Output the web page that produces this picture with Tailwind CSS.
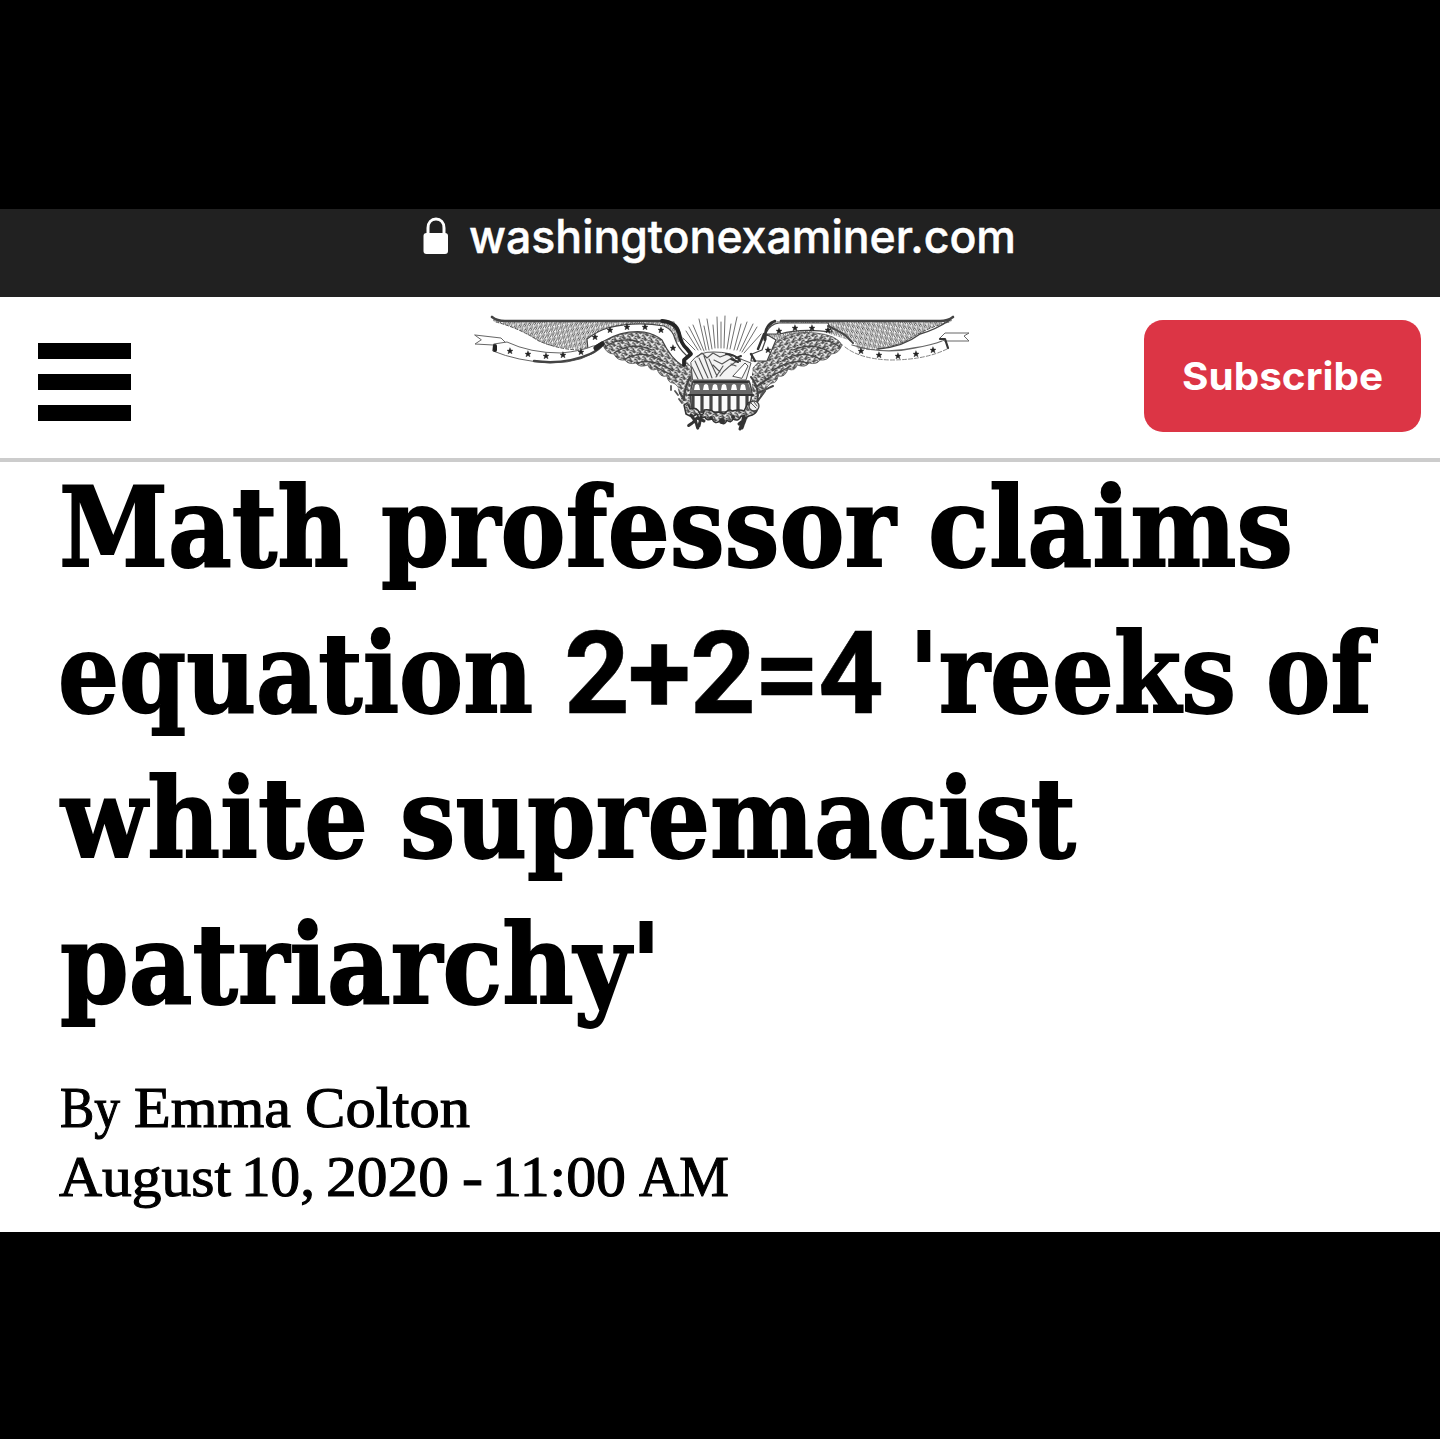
<!DOCTYPE html>
<html lang="en">
<head>
<meta charset="utf-8">
<meta name="viewport" content="width=device-width, initial-scale=1">
<title>Washington Examiner</title>
<script src="https://cdn.jsdelivr.net/npm/@tailwindcss/browser@4"></script>
</head>
<body class="bg-black">
<main class="flex h-[1439px] w-[1440px] flex-col overflow-hidden bg-black pt-[209px]">
  <div class="flex h-[88px] shrink-0 bg-[#212121] pl-[422px]">
    <svg class="mt-2 h-10 w-7 shrink-0" viewBox="0 0 28 40" fill="none">
      <path d="M6 18V11C6 5.500 9.400 2 14 2s8 3.500 8 9v7" stroke="#fff" stroke-width="3"/>
      <rect x="1.500" y="16" width="24.500" height="21" rx="3" fill="#fff"/>
    </svg>
    <svg class="ml-[18px] h-16 w-[550px] overflow-visible" viewBox="468 209 550 64">
      <text x="469" y="252.500" textLength="547" lengthAdjust="spacingAndGlyphs" class="fill-white stroke-white stroke-[0.5px] font-['Inter',sans-serif] text-[46px] font-medium">washingtonexaminer.com</text>
    </svg>
  </div>

  <header class="flex h-[165px] shrink-0 items-start border-b-4 border-[#cccccc] bg-white">
    <button class="mt-[46px] ml-[38px] flex w-[93px] flex-col gap-[15px]" aria-label="Menu">
      <span class="h-4 w-full bg-black"></span>
      <span class="h-4 w-full bg-black"></span>
      <span class="h-4 w-full bg-black"></span>
    </button>
    <svg class="mt-2 ml-[339px] h-[130px] w-[510px]" viewBox="470 305 510 130" fill="none" stroke-linecap="round" stroke-linejoin="round">
      <defs>
        <pattern id="feather" width="5" height="5" patternUnits="userSpaceOnUse" patternTransform="rotate(-12)">
          <rect width="5" height="5" fill="#f4f4f4"/>
          <path d="M0 4.500L3 .5M2.500 4.500L5 1.500M0 2l1-1.500" stroke="#404040" stroke-width="1"/>
        </pattern>
        <pattern id="down" width="7" height="5" patternUnits="userSpaceOnUse" patternTransform="rotate(18)">
          <rect width="7" height="5" fill="#eee"/>
          <path d="M0 1q3-1 4 1t3 1M1 4q2-2 3 0M5 5q0-2 2-2" stroke="#333" stroke-width="1.100"/>
        </pattern>
        <path id="star" d="M0-3 1-.9 3-.8 1.400.6 2 2.800 0 1.500-2 2.800-1.400.6-3-.8-1-.9Z" fill="#222" stroke="#222" stroke-width=".4"/>
        <g id="feathers">
          <path d="M493 317L500 321H674L684 340L670 345L628 330L590 342L588 349Q556 350 538 341Q518 327 493 321Z" fill="url(#feather)"/>
          <path d="M496 322Q519 328 539 341Q560 350 582 350" stroke="#555" stroke-width="1" stroke-dasharray="3 2"/>
          <path d="M492 317Q497 321 505 321H664" stroke="#444" stroke-width="2.600"/>
          <path d="M603 345Q608 335 629 333Q652 330 666 340L692 368L691 389L682 393Q677 384 673 383Q668 383 667 376Q660 378 657 369Q650 372 648 365Q639 368 636 363Q628 365 625 360Q617 361 614 354Q606 354 603 345Z" fill="url(#down)" stroke="#555" stroke-width=".8"/>
          <path d="M605 347Q620 336 640 342M614 353Q632 341 652 350M625 359Q644 349 663 361M637 363Q654 358 673 371M654 366L681 380" stroke="#444" stroke-width="1.200"/>
        </g>
      </defs>
      <use href="#feathers"/>
      <use href="#feathers" transform="matrix(-1 0 0 1 1445 0)"/>
      <path d="M587 339Q599 330 608 328Q635 321 664 326Q673 330 675 339Q678 348 687 356L683 366Q671 359 662 340Q655 334 644 332Q623 330 604 341L588 350Z" fill="#fff" stroke="#444" stroke-width="1.200"/>
      <path d="M662 321Q676 322 679 333Q681 344 687 349L691 354L684 360L684 365" stroke="#252525" stroke-width="3.800"/>
      <path d="M475 335L501 338L506 343L493 345L475 344L481 340Z" fill="#fff" stroke="#666" stroke-width="1"/>
      <path d="M494 344L507 342Q530 353 561 353Q582 351 593 346L602 346Q586 363 550 363Q517 361 493 351Z" fill="#fff" stroke="#666" stroke-width="1"/>
      <path d="M495 346V350" stroke="#222" stroke-width="4"/>
      <path d="M534 361Q565 365 590 354Q599 350 603 344" stroke="#444" stroke-width="2.300"/>
      <path d="M596 348L602 344" stroke="#252525" stroke-width="5"/>
      <use href="#star" x="510" y="351"/><use href="#star" x="528" y="354"/><use href="#star" x="546" y="356"/><use href="#star" x="563" y="355"/><use href="#star" x="581" y="352"/>
      <use href="#star" x="595" y="337"/><use href="#star" x="610" y="330"/><use href="#star" x="627" y="327"/><use href="#star" x="645" y="327"/><use href="#star" x="661" y="330"/><use href="#star" x="673" y="348"/>
      <path d="M766 333Q770 324 779 323H828L832 332Q800 328 780 334L766 334L776 340L767 361L751 361L752 354L762 350L766 339Z" fill="#fff" stroke="#444" stroke-width="1.200"/>
      <path d="M765 340Q764 325 775 321M751 354L755 361M764 334L758 349" stroke="#333" stroke-width="2.400"/>
      <path d="M828 326Q835 329 845 335L853 343" stroke="#444" stroke-width="2" stroke-dasharray="4 1"/>
      <path d="M845 345Q858 350 880 351Q918 352 940 341L945 337L948 349Q922 362 886 360Q861 358 845 347Z" fill="#fff"/>
      <path d="M852 345Q884 355 914 348Q932 345 942 341" stroke="#666" stroke-width="1.300"/>
      <path d="M845 347Q860 359 890 360Q925 360 947 349" stroke="#777" stroke-width=".9" stroke-dasharray="4 2"/>
      <path d="M878 349Q903 347 920 334Q935 330 950 320" stroke="#444" stroke-width="1.500"/>
      <path d="M940 338L945 333L969 333L964 336L969 341L945 341Z" fill="#fff" stroke="#666"/>
      <path d="M940 339H945L948 348" stroke="#333" stroke-width="2.200"/>
      <use href="#star" x="779" y="331"/><use href="#star" x="795" y="328"/><use href="#star" x="812" y="328"/><use href="#star" x="828" y="330"/><use href="#star" x="768" y="350"/>
      <use href="#star" x="861" y="351"/><use href="#star" x="879" y="355"/><use href="#star" x="898" y="356"/><use href="#star" x="916" y="354"/><use href="#star" x="933" y="350"/>
      <path d="M695 350L683 338M698 350L686 331M701 350L689 327M704 351L693 325M706 350L699 319M709 350L704 326M712 349L707 319M715 348L713 325M718 348L717 317M721 348V322M724 348L725 316M727 349L731 324M730 349L737 317M734 350L741 324M737 350L747 322M740 351L753 324M742 352L757 327M744 353L761 334" stroke="#707070" stroke-width="1"/>
      <path d="M691 362Q699 351 714 352Q731 352 738 358L751 363L746 380H693Z" fill="#f3f3f3" stroke="#555" stroke-width="1"/>
      <path d="M695 361L703 379M699 358L708 378M704 356L712 378M709 359L717 376M713 365L720 372M720 376Q727 366 741 359M716 377L723 366M692 367L698 379M697 357L702 353L707 358L713 353L720 357L728 354L736 361M714 360l8 4 8-5M731 364l5 2" stroke="#555" stroke-width="1.100"/>
      <path d="M733 376L745 363L748 366L742 378Z" fill="#fff" stroke="#555"/>
      <path d="M726 354Q737 355 740 361M736 358L741 356M731 359L738 362" stroke="#333" stroke-width="2"/>
      <path d="M677 377L690 371L691 410L682 402L678 390ZM752 371L771 378L764 389L758 397L752 404Z" fill="url(#down)"/>
      <path d="M690 377Q684 389 684 400L680 393M751 377Q760 388 757 402L765 391M756 387L769 378M758 393L773 386" stroke="#444" stroke-width="2" stroke-dasharray="5 1"/>
      <path d="M693 381H749Q755 395 747 412H693Q688 396 693 381Z" fill="#fafafa" stroke="#444" stroke-width="1.500"/>
      <path d="M694 382H748L752 394H690Z" fill="#686868"/>
      <path d="M689 395H753M694 382H748" stroke="#333" stroke-width="2.200"/>
      <g fill="#fff"><path d="M694 390l1-5 2-1 2 1 1 5ZM703 390l1-5 2-1 2 1 1 5ZM712 390l1-5 2-1 2 1 1 5ZM721 390l1-5 2-1 2 1 1 5ZM731 390l1-5 2-1 2 1 1 5ZM740 390l1-5 2-1 2 1 1 5Z"/></g>
      <path d="M693 396V412M702 396V413M711 396V414M720 396V414M729 396V414M738 396V413M747 396V411" stroke="#444" stroke-width="3.200" stroke-linecap="butt"/>
      <path d="M684 405Q688 401 690 409Q697 406 700 414Q704 416 704 410Q711 409 715 413Q720 411 724 414Q729 408 732 411Q740 409 744 411L748 403Q757 399 758 408Q756 415 749 416L745 418L741 416Q739 422 733 419Q731 424 727 420Q724 427 720 421Q715 425 712 419Q706 421 705 417L699 419L697 414L692 417L686 414Z" fill="url(#down)" stroke="#333" stroke-width="1.500"/>
      <circle cx="722" cy="421" r="3" fill="#333"/><circle cx="711" cy="418" r="2" fill="#333"/><circle cx="733" cy="417" r="2" fill="#333"/>
      <path d="M691 415L695 421L688 426M695 419L698 429M697 418L704 421M701 417L699 426M744 416L740 429M746 418L739 424M745 420L742 428" stroke="#333" stroke-width="3" stroke-dasharray="4 1.500"/>
      <circle cx="754" cy="406" r="5" fill="#eee" stroke="#444" stroke-width="1.300"/>
      <path d="M751 403l5 5M754 402l3 4" stroke="#555"/>
      <path d="M671 386v4M675 391l3 4M679 399l3 4M766 389l-5 6" stroke="#555" stroke-width="1.800"/>
    </svg>
    <button class="mt-[23px] ml-[164px] flex h-[112px] w-[277px] items-center justify-center rounded-[19px] bg-[#dc3545]">
      <svg class="h-[60px] w-[205px]" viewBox="1180 345 205 60">
        <text x="1182" y="389" textLength="201" lengthAdjust="spacingAndGlyphs" class="fill-white font-['Inter',sans-serif] text-[38px] font-bold">Subscribe</text>
      </svg>
    </button>
  </header>

  <article class="flex h-[770px] shrink-0 flex-col bg-white">
    <h1>
      <svg class="block h-[588px] w-[1440px] fill-black stroke-black stroke-[1.8px] font-['DejaVu_Serif',serif] text-[111px] font-bold" viewBox="0 462 1440 588">
        <text x="59" y="566" textLength="290" lengthAdjust="spacingAndGlyphs">Math</text>
        <text x="381" y="566" textLength="515" lengthAdjust="spacingAndGlyphs">professor</text>
        <text x="928" y="566" textLength="365" lengthAdjust="spacingAndGlyphs">claims</text>
        <text x="58" y="711.500" textLength="475" lengthAdjust="spacingAndGlyphs">equation</text>
        <text x="564 628 690 754 818" y="712.500" class="stroke-[0.5px] font-['Roboto',sans-serif] text-[115px]">2+2=4</text>
        <text x="909" y="711.500" textLength="327" lengthAdjust="spacingAndGlyphs">'reeks</text>
        <text x="1266" y="711.500" textLength="106" lengthAdjust="spacingAndGlyphs">of</text>
        <text x="61" y="857" textLength="307" lengthAdjust="spacingAndGlyphs">white</text>
        <text x="400" y="857" textLength="676" lengthAdjust="spacingAndGlyphs">supremacist</text>
        <text x="60" y="1002.500" textLength="601" lengthAdjust="spacingAndGlyphs">patriarchy'</text>
      </svg>
    </h1>
    <svg class="block h-[180px] w-[1440px] fill-black stroke-black stroke-[1.1px] font-['Liberation_Serif',serif] text-[56.5px]" viewBox="0 1050 1440 180">
      <text x="60" y="1127" textLength="60" lengthAdjust="spacingAndGlyphs">By</text>
      <text x="134" y="1127" textLength="157" lengthAdjust="spacingAndGlyphs">Emma</text>
      <text x="305" y="1127" textLength="165" lengthAdjust="spacingAndGlyphs">Colton</text>
      <text x="59" y="1196" textLength="172" lengthAdjust="spacingAndGlyphs">August</text>
      <text x="241" y="1196" textLength="74" lengthAdjust="spacingAndGlyphs">10,</text>
      <text x="326" y="1196" textLength="123" lengthAdjust="spacingAndGlyphs">2020</text>
      <text x="462" y="1196" textLength="21" lengthAdjust="spacingAndGlyphs">-</text>
      <text x="492" y="1196" textLength="134" lengthAdjust="spacingAndGlyphs">11:00</text>
      <text x="639" y="1196" textLength="90" lengthAdjust="spacingAndGlyphs">AM</text>
    </svg>
  </article>
</main>
</body>
</html>
